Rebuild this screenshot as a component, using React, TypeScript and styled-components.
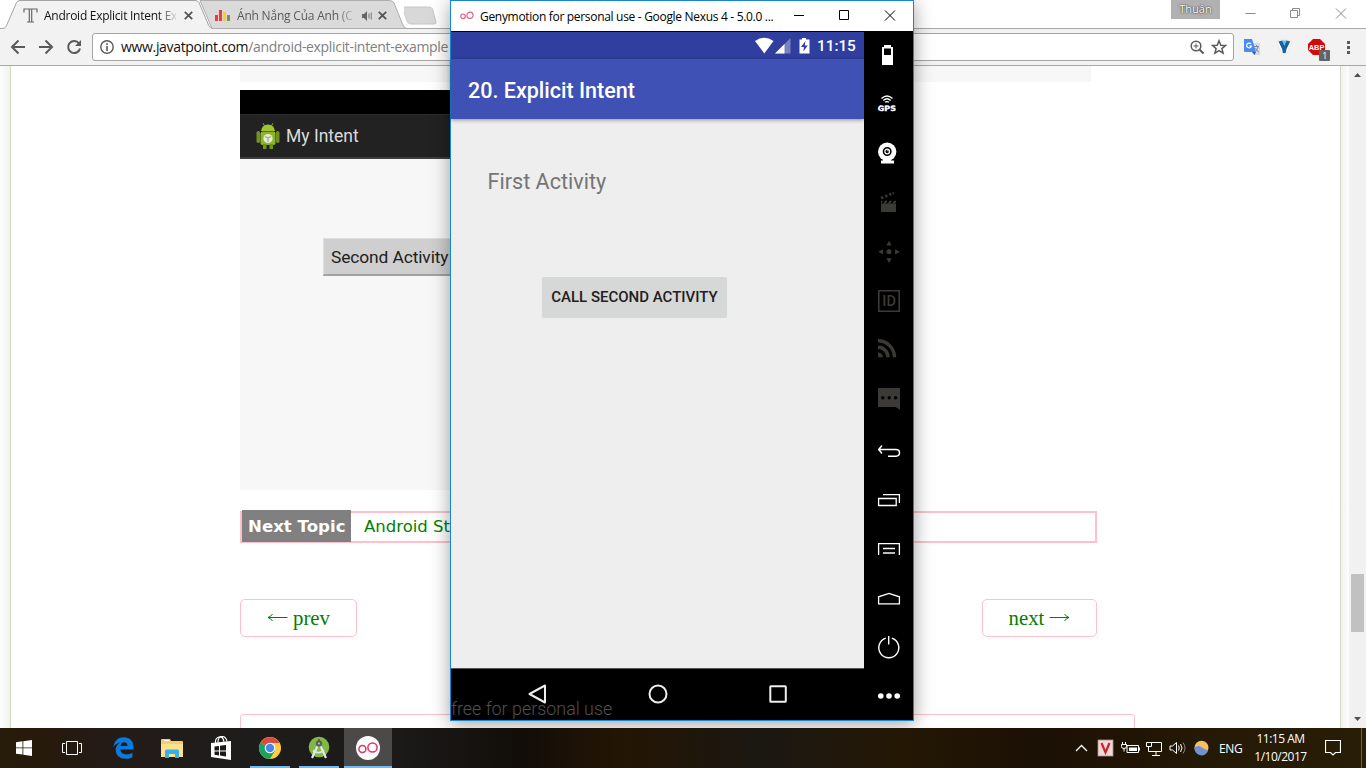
import React from 'react';
import styled, { createGlobalStyle } from 'styled-components';

const Global = createGlobalStyle`
  * { box-sizing: border-box; }
  html, body { margin: 0; padding: 0; overflow: hidden; }
  svg { display: block; flex: none; }
`;

const ui = `"Open Sans", "Noto Sans", sans-serif`;
const roboto = `Roboto, sans-serif`;

const Desktop = styled.div`
  position: relative;
  display: flex;
  flex-direction: column;
  width: 1366px;
  height: 768px;
  overflow: hidden;
  background: #fff;
  font-family: ${ui};
`;

const Browser = styled.div`
  display: flex;
  flex-direction: column;
  height: 728px;
`;

const TabStrip = styled.div`
  display: flex;
  height: 29px;
  background: #fff;
  border-bottom: 1px solid #a9a9a9;
`;

const Tab = styled.div<{ $width: number; $pad: number; $front?: boolean }>`
  position: relative;
  display: flex;
  align-items: center;
  width: ${p => p.$width}px;
  height: 29px;
  padding: 2px 0 0 ${p => p.$pad}px;
  z-index: ${p => (p.$front ? 2 : 1)};
`;

const TabShape = styled.svg`
  position: absolute;
  left: 0;
  top: 0;
  overflow: visible;
`;

const TabTitle = styled.span<{ $color: string; $width: number; $gap: number; $track: number }>`
  position: relative;
  width: ${p => p.$width}px;
  margin-left: ${p => p.$gap}px;
  white-space: nowrap;
  font-size: 12px;
  line-height: 20px;
  letter-spacing: ${p => p.$track}px;
  color: ${p => p.$color};
  mask-image: linear-gradient(to right, #000 86%, transparent 102%);
`;

const TabGlyph = styled.svg<{ $gap?: number }>`
  position: relative;
  margin-left: ${p => p.$gap ?? 0}px;
`;

const CaptionArea = styled.div`
  display: flex;
  flex: 1;
  justify-content: flex-end;
  align-items: flex-start;
`;

const UserBadge = styled.div`
  width: 49px;
  height: 19px;
  margin-right: 25px;
  background: #b1b1b1;
  color: #fff;
  font-size: 11px;
  line-height: 17px;
  text-align: center;
  text-shadow: 0 0 2px #333, 0 0 1px #333;
`;

const Toolbar = styled.div`
  display: flex;
  align-items: center;
  height: 37px;
  background: #f2f2f2;
  border-bottom: 1px solid #a9a9a9;
`;

const NavGlyphs = styled.svg`
  width: 92px;
  height: 36px;
`;

const AddressBar = styled.div`
  display: flex;
  align-items: center;
  width: 1142px;
  height: 28px;
  padding: 0 6px 0 7px;
  border: 1px solid #a5a5a5;
  border-radius: 3px;
  background: #fff;
`;

const Url = styled.div`
  flex: 1;
  margin-left: 7px;
  font-size: 14px;
  line-height: 24px;
  letter-spacing: -0.33px;
  white-space: nowrap;
  color: #808080;
  b { font-weight: 400; color: #111; }
`;

const Viewport = styled.div`
  display: flex;
  height: 662px;
  overflow: hidden;
`;

const Gutter = styled.div<{ $side: 'left' | 'right' }>`
  width: ${p => (p.$side === 'left' ? 11 : 9)}px;
  background: ${p =>
    p.$side === 'left'
      ? 'linear-gradient(to right, #fdfdfd, #eff3ee)'
      : 'linear-gradient(to right, #eff3ee, #fdfdfd)'};
  border-${p => (p.$side === 'left' ? 'right' : 'left')}: 1px solid #d4dac2;
`;

const Page = styled.main`
  display: flex;
  flex-direction: column;
  width: 1329px;
  padding-left: 229px;
  background: #fff;
  > * { flex: none; }
`;

const CodeTail = styled.div`
  width: 851px;
  height: 16px;
  background: #f7f7f7;
`;

const Shot = styled.div`
  width: 400px;
  height: 400px;
  margin-top: 8px;
  background: #f7f7f7;
  font-family: ${roboto};
`;

const ShotStatus = styled.div`
  height: 24px;
  background: #000;
`;

const ShotBar = styled.div`
  display: flex;
  align-items: center;
  gap: 6px;
  height: 45px;
  padding-left: 16px;
  background: #222;
  border-top: 1px solid #2c2c2c;
  border-bottom: 2px solid #3c3c3c;
  color: #dcdcdc;
  font-size: 17.5px;
`;

const ShotButton = styled.div`
  width: 150px;
  height: 38px;
  margin: 79px 0 0 83px;
  padding-left: 7px;
  background: #cfcfcf;
  border: 1px solid #dedede;
  border-bottom: 2px solid #a2a2a2;
  color: #1d1d1d;
  font-size: 17.4px;
  letter-spacing: -0.12px;
  line-height: 37px;
  white-space: nowrap;
`;

const NextTopic = styled.div`
  display: flex;
  width: 857px;
  height: 32px;
  margin-top: 21px;
  border: 2px solid #ffc0cb;
`;

const NextLabel = styled.span`
  width: 109px;
  height: 32px;
  margin-top: -3px;
  padding-left: 6px;
  background: #808080;
  color: #fff;
  font: bold 16.6px/34px "DejaVu Sans", Verdana, sans-serif;
  white-space: nowrap;
`;

const NextLink = styled.a`
  margin-left: 13px;
  color: #008000;
  font: 16.5px/28px "DejaVu Sans", Verdana, sans-serif;
`;

const Pager = styled.div`
  display: flex;
  justify-content: space-between;
  width: 857px;
  margin-top: 56px;
`;

const PagerLink = styled.a<{ $width: number }>`
  display: flex;
  align-items: center;
  justify-content: center;
  gap: 5px;
  width: ${p => p.$width}px;
  height: 38px;
  border: 1px solid #ffc0cb;
  border-radius: 5px;
  color: #008000;
  font: 20.8px "Liberation Serif", serif;
`;

const CommentBox = styled.div`
  width: 895px;
  height: 40px;
  margin-top: 77px;
  border: 1px solid #ffc0cb;
  border-radius: 3px;
`;

const Scrollbar = styled.div`
  display: flex;
  flex-direction: column;
  align-items: center;
  width: 17px;
  background: #f1f1f1;
`;

const Thumb = styled.div`
  flex: none;
  width: 13px;
  height: 58px;
  margin: 491px 0 79px;
  background: #c1c1c1;
`;

/* Emulator window */
const Emulator = styled.section`
  position: absolute;
  left: 450px;
  top: 0;
  width: 464px;
  height: 721px;
  border: 1px solid #1883d7;
  background: #000;
  box-shadow: 0 3px 18px rgba(0, 0, 0, 0.38);
  display: flex;
  flex-direction: column;
  z-index: 5;
`;

const TitleBar = styled.header`
  display: flex;
  align-items: center;
  height: 30px;
  padding-left: 9px;
  background: #fff;
`;

const WindowTitle = styled.span`
  width: 310px;
  margin-left: 6px;
  font-size: 12px;
  letter-spacing: -0.31px;
  white-space: nowrap;
  color: #000;
`;

const EmulatorBody = styled.div`
  display: flex;
  flex: 1;
`;

const Phone = styled.div`
  position: relative;
  display: flex;
  flex-direction: column;
  width: 413px;
  padding-top: 1px;
  font-family: ${roboto};
`;

const StatusBar = styled.div`
  display: flex;
  align-items: center;
  justify-content: flex-end;
  height: 27px;
  padding-right: 8px;
  background: #303f9f;
  color: #fff;
  font-size: 15.3px;
  font-weight: 500;
`;

const Clock = styled.span`
  width: 39px;
  margin-left: 6px;
  padding-top: 1px;
  white-space: nowrap;
`;

const AppBar = styled.div`
  position: relative;
  height: 60px;
  padding-left: 17px;
  background: #3f51b5;
  box-shadow: 0 1px 4px rgba(0, 0, 0, 0.4);
  color: #fff;
  font-size: 21.5px;
  font-weight: 500;
  line-height: 64px;
`;

const Activity = styled.div`
  height: 549px;
  padding: 49px 0 0 36.5px;
  background: #eee;
`;

const ActivityLabel = styled.div`
  color: #757575;
  font-size: 21.6px;
  line-height: 28px;
`;

const CallButton = styled.button`
  display: block;
  width: 185px;
  height: 39.5px;
  margin: 81px 0 0 54.5px;
  padding: 0;
  border: 0;
  border-radius: 2px;
  background: #d6d7d7;
  box-shadow: 0 1px 1px rgba(0, 0, 0, 0.1);
  color: #1f2020;
  font: 500 15px/40px ${roboto};
  white-space: nowrap;
`;

const PhoneNav = styled.nav`
  display: flex;
  align-items: center;
  gap: 96.5px;
  height: 52px;
  padding: 0 0 2px 74px;
  border-top: 1px solid #555;
`;

const Watermark = styled.span`
  position: absolute;
  left: 0;
  bottom: -1px;
  color: #505050;
  font-size: 17.9px;
  font-weight: 300;
  line-height: 24px;
  white-space: nowrap;
`;

const SideTools = styled.aside`
  width: 49px;
  svg { width: 49px; height: 49px; }
`;

/* Taskbar */
const Taskbar = styled.footer`
  position: relative;
  z-index: 10;
  display: flex;
  height: 40px;
  background: linear-gradient(
    to right,
    #271b09 0,
    #261a0c 50px,
    #241b18 110px,
    #1e1d1b 220px,
    #1b1a19 400px,
    #120d08 520px,
    #241503 620px,
    #1b1712 760px,
    #241804 900px,
    #1b1004 1040px,
    #241905 1200px,
    #281d05 1366px
  );
`;

const TaskButton = styled.div<{ $width: number; $active?: boolean; $running?: boolean }>`
  display: flex;
  align-items: center;
  justify-content: center;
  width: ${p => p.$width}px;
  background: ${p => (p.$active ? '#4b4a48' : 'transparent')};
  box-shadow: ${p => (p.$running ? 'inset 0 -2px 0 #76b9ed' : 'none')};
`;

const Spacer = styled.div<{ $width: number }>`
  width: ${p => p.$width}px;
`;

const Tray = styled.div`
  display: flex;
  align-items: center;
  margin-left: auto;
  color: #fff;
`;

const TrayLang = styled.span`
  width: 30.5px;
  font-size: 12px;
  letter-spacing: -0.3px;
`;

const TrayClock = styled.div`
  width: 62px;
  margin-right: 13.5px;
  font-size: 12px;
  line-height: 18px;
  letter-spacing: -0.5px;
  text-align: center;
  white-space: nowrap;
`;

const ShowDesktop = styled.div`
  width: 5px;
  height: 40px;
  margin-left: 20px;
  border-left: 1px solid #6b6350;
`;

const grey = '#3b3a36';

const CloseX = ({ gap }: { gap: number }) => (
  <TabGlyph $gap={gap} width="9" height="9" viewBox="0 0 9 9">
    <path d="M.8.8l7.400 7.400M8.200.8L.8 8.200" stroke="#555" strokeWidth="1.800" />
  </TabGlyph>
);

const BrowserTabs = () => (
  <TabStrip>
    <Tab $width={206} $pad={23} $front>
      <TabShape width="212" height="29">
        <path d="M0 29V28.500C5 28.500 5.500 28 7 24.500L16.500 2.500Q17.500.5 20 .5H195Q198 .5 199 2.500L208.500 25Q210 28.500 213 28.500V29Z" fill="#f2f2f2" />
        <path d="M0 28.500C5 28.500 5.500 28 7 24.500L16.500 2.500Q17.500.5 20 .5H195Q198 .5 199 2.500L208.500 25Q210 28.500 213 28.500" fill="none" stroke="#a3a3a3" />
      </TabShape>
      <TabGlyph width="15" height="15" viewBox="0 0 15 15">
        <path d="M1 4.500V1h13v3.500M6.300 1v13M8.700 1v13M4 14h7" fill="none" stroke="#666" strokeWidth="1.200" />
      </TabGlyph>
      <TabTitle $color="#111" $width={132} $gap={6} $track={-0.26}>Android Explicit Intent Ex</TabTitle>
      <CloseX gap={8} />
    </Tab>
    <Tab $width={198} $pad={9}>
      <TabShape width="200" height="29">
        <path d="M-6 .5H183Q187 .5 188 3L196.500 24Q198 28.500 201 28.500H6Z" fill="#dadada" stroke="#adadad" />
      </TabShape>
      <TabGlyph width="16" height="11" viewBox="0 0 16 11">
        <path d="M0 5h3v6H0zM4 0h3v11H4z" fill="#ef3b35" />
        <path d="M8 2h3v9H8z" fill="#f5cf31" />
        <path d="M12 5h3v6h-3z" fill="#81933f" />
      </TabGlyph>
      <TabTitle $color="#5a5a5a" $width={117} $gap={6} $track={-0.2}>Ánh Nắng Của Anh (C</TabTitle>
      <TabGlyph $gap={8} width="11" height="10" viewBox="0 0 11 10">
        <path d="M0 3h2l3-3v10L2 7H0z" fill="#666" />
        <path d="M7 2.500v5M9.200 1.500v7" stroke="#777" />
      </TabGlyph>
      <CloseX gap={5} />
    </Tab>
    <svg width="36" height="29">
      <path d="M-1.500 8.500Q-2 7 0 7H25Q27.500 7 28.500 9L32 22Q32.500 24 30 24H7Q4.500 24 3.500 22Z" fill="#d8d8d8" stroke="#c6c6c6" />
    </svg>
    <CaptionArea>
      <UserBadge>Thuận</UserBadge>
      <svg width="121" height="28" fill="none" stroke="#8b8b8b">
        <path d="M.5 13.500h10M45.500 10.500h7v7h-7zM47.500 10.500v-2h7v7h-2M91 8.500l10 10M101 8.500l-10 10" />
      </svg>
    </CaptionArea>
  </TabStrip>
);

const BrowserToolbar = () => (
  <Toolbar>
    <NavGlyphs fill="none" stroke="#5a5a5a" strokeWidth="2">
      <path d="M25 18H12.500M18.500 11.500L12 18l6.500 6.500M39 18h12.500M45.500 11.500L52 18l-6.500 6.500" />
      <path d="M79 14.500A6 6 0 1 0 80 19.500" />
      <path d="M81 11v6h-6z" fill="#5a5a5a" stroke="none" />
    </NavGlyphs>
    <AddressBar>
      <svg width="14" height="14" viewBox="0 0 14 14" fill="none" stroke="#5a5a5a">
        <circle cx="7" cy="7" r="6.200" strokeWidth="1.400" />
        <path d="M7 6v5M7 3.200v1.700" strokeWidth="1.600" />
      </svg>
      <Url><b>www.javatpoint.com</b>/android-explicit-intent-example</Url>
      <svg width="38" height="18" viewBox="0 0 38 18" fill="none" stroke="#5a5a5a">
        <circle cx="7" cy="8" r="4.800" strokeWidth="1.500" />
        <path d="M10.500 11.500l4 4" strokeWidth="2" />
        <path d="M4.500 8h5M7 5.500v5" />
        <path d="M30 2.800l1.800 4.400 4.700.3-3.600 3.100 1.200 4.600-4.100-2.500-4.100 2.500 1.200-4.600-3.600-3.100 4.700-.3z" strokeWidth="1.500" />
      </svg>
    </AddressBar>
    <svg width="132" height="36" viewBox="0 0 132 36">
      <path d="M17 14h9v12h-6z" fill="#d8dadd" />
      <path d="M10 10h8l4 13H11q-1 0-1-1z" fill="#4a8af4" />
      <path d="M18 23h4l-1.500 3z" fill="#3a52c4" />
      <path d="M17 15a2.400 2.400 0 1 0 .4 2h-2.200" fill="none" stroke="#fff" strokeWidth="1.200" />
      <path d="M20 17.500h5M22.500 16v2M24 17.500c-.5 3-2 4.500-3 5.500M21.500 19c1 2 2 3.200 3.500 4" fill="none" stroke="#7b909a" />
      <path d="M43 12q6-3 14 0l.5 3-5 9.500h-4L43 15z" fill="#fff" stroke="#ddd" strokeWidth=".6" />
      <path d="M44.500 12.500l4-1 1.900 3 1.800-3 4 1-3.700 7.500-.8 4h-2.800l-.8-4z" fill="#1a5f9f" />
      <path d="M48 11.500h4.800l-2.400 5.500z" fill="#63c6ef" />
      <path d="M79 10h7l5 5v6l-5 5h-7l-5-5v-6z" fill="#d20a0a" />
      <text x="74.800" y="21" fontFamily="Liberation Sans" fontWeight="bold" fontSize="8" fill="#fff" textLength="15.500" lengthAdjust="spacingAndGlyphs">ABP</text>
      <rect x="85" y="21" width="11" height="11" rx="1" fill="#646464" />
      <text x="88.200" y="30" fontFamily="Open Sans" fontSize="9" fill="#fff">1</text>
      <path d="M113 12h3v3h-3zM113 17h3v3h-3zM113 22h3v3h-3z" fill="#5a5a5a" />
    </svg>
  </Toolbar>
);

const AndroidBot = () => (
  <svg width="24" height="28" viewBox="0 0 24 28">
    <path d="M7 1l2 4M17 1l-2 4" stroke="#7b9a2b" />
    <path d="M5 9q1-6.500 7-6.500T19 9z" fill="#9ec52e" />
    <rect x="4.500" y="9.500" width="15" height="13.500" rx="2" fill="#8db52a" />
    <rect x="0.500" y="9" width="3.500" height="12" rx="1.700" fill="#6f921f" />
    <rect x="20" y="9" width="3.500" height="12" rx="1.700" fill="#6f921f" />
    <path d="M7 22h3.500v5H7zM13.500 22H17v5h-3.500z" fill="#6f921f" />
    <circle cx="12" cy="16.500" r="4.600" fill="#e6ecd8" />
    <path d="M9 14.500l3 1.500 3-1.500M12 16v4" fill="none" stroke="#9aa78a" strokeWidth="1.200" />
  </svg>
);

const WebPage = () => (
  <Viewport>
    <Gutter $side="left" />
    <Page>
      <CodeTail />
      <Shot>
        <ShotStatus />
        <ShotBar><AndroidBot />My Intent</ShotBar>
        <ShotButton>Second Activity</ShotButton>
      </Shot>
      <NextTopic>
        <NextLabel>Next Topic</NextLabel>
        <NextLink>Android Startactivityforresult</NextLink>
      </NextTopic>
      <Pager>
        <PagerLink $width={117}>
          <svg width="21" height="10" viewBox="0 0 21 10" fill="none" stroke="#008000"><path d="M20.500 4.500H1.500M5.500 1Q4 3.500 1 4.500q3 1 4.500 3.500" /></svg>
          prev
        </PagerLink>
        <PagerLink $width={115}>
          next
          <svg width="21" height="10" viewBox="0 0 21 10" fill="none" stroke="#008000"><path d="M.5 4.500h19M15.500 1Q17 3.500 20 4.500q-3 1-4.500 3.500" /></svg>
        </PagerLink>
      </Pager>
      <CommentBox />
    </Page>
    <Gutter $side="right" />
    <Scrollbar>
      <svg width="17" height="17"><path d="M5 11h7L8.500 7z" fill="#505050" /></svg>
      <Thumb />
      <svg width="17" height="17"><path d="M5 6h7l-3.500 4z" fill="#505050" /></svg>
    </Scrollbar>
  </Viewport>
);

const SideIcons = () => (
  <SideTools>
    <svg fill="#fff">
      <path d="M20 14h7v2h2v18H18V16h2z" />
      <path d="M20 17.500h7V24h-7z" fill="#000" />
    </svg>
    <svg fill="none" stroke="#fff" strokeWidth="1.300">
      <path d="M17.500 18.500Q23 13.500 28.500 18.500M19.300 20.500Q23 17 26.700 20.500M21 22.300Q23 20.800 25 22.300" />
      <text x="13.800" y="31.300" fontFamily="DejaVu Sans" fontWeight="bold" fontSize="7.400" textLength="18.200" lengthAdjust="spacingAndGlyphs" fill="#fff" stroke="#fff" strokeWidth=".3">GPS</text>
    </svg>
    <svg fill="#fff">
      <path d="M19 30h8v1.500h3v3H17v-3h2z" />
      <circle cx="23.200" cy="22.800" r="9.200" />
      <circle cx="23.200" cy="22.500" r="3.700" stroke="#000" strokeWidth="1.600" />
      <circle cx="23.200" cy="22.500" r="1.700" fill="#000" />
      <circle cx="24" cy="21.800" r=".7" />
    </svg>
    <svg fill={grey}>
      <path d="M17 25.500h15V34H17zM17 22.700h2l-1.500 2.500H17zM21 22.700h2.500L22 25.200h-2.500zM25.500 22.700H28l-1.500 2.500H24zM30 22.700h2l0 1-1 1.500h-2.500z" />
      <path d="M16.500 19l2-1 1.500 2.200-2.500 1zM20.500 17.200l2-1 1.600 2.200-2 1zM24.500 15.600l2-.8 1.500 2.200-2 .9zM28.200 14.300l1.300-.4.8 2.200-1.200.4z" />
    </svg>
    <svg fill={grey}>
      <circle cx="25" cy="24.800" r="2.500" />
      <path d="M25 14l2.700 4.600h-5.400zM25 36l2.700-4.700h-5.400zM14.200 24.800l4.700-2.600v5.200zM35.800 24.800l-4.700-2.600v5.200z" />
    </svg>
    <svg fill="none" stroke={grey} strokeWidth="1.600">
      <path d="M14.800 14.800h20.400v20.400H14.800z" />
      <text x="18.200" y="30" fontFamily="Roboto" fontWeight="500" fontSize="14.500" textLength="13.800" fill={grey} stroke="none">ID</text>
    </svg>
    <svg fill="none" stroke={grey} strokeWidth="3.400">
      <path d="M14 15.800A16.500 16.500 0 0 1 30.500 32.300M14 22.300A10 10 0 0 1 24 32.300" />
      <path d="M14 27.500a5 5 0 0 1 5 4.800h-5z" fill={grey} stroke="none" />
    </svg>
    <svg fill={grey}>
      <path d="M14 14h22v21.700L31.500 33H14z" />
      <g fill="#000"><circle cx="18.800" cy="23.800" r="1.700" /><circle cx="25.200" cy="23.800" r="1.700" /><circle cx="31.600" cy="23.800" r="1.700" /></g>
    </svg>
    <svg fill="none" stroke="#fff" strokeWidth="1.500">
      <path d="M18 22.500L14.700 26.500l3.300 4M15 26.500h17q3.500 0 3.500 3.300T32 33.200h-8" />
    </svg>
    <svg fill="none" stroke="#fff" strokeWidth="1.300">
      <path d="M14.600 26.500h17.600v7H14.600zM19 22.600h16.400V31" />
    </svg>
    <svg fill="none" stroke="#fff" strokeWidth="1.300">
      <path d="M14.600 34V22.600h20.800V34M19 27.500h12" />
      <path d="M19 32h12" strokeWidth="2" stroke="#bbb" />
    </svg>
    <svg fill="none" stroke="#fff" strokeWidth="1.300">
      <path d="M14.600 33.800v-7L25 23.500l10.400 3.300v7z" />
    </svg>
    <svg fill="none" stroke="#fff" strokeWidth="1.400">
      <path d="M21.800 19.200A10 10 0 1 0 27.800 19.200M24.700 17v8.500" />
    </svg>
    <svg fill="#fff">
      <circle cx="16.800" cy="28" r="2.800" /><circle cx="25" cy="28" r="2.800" /><circle cx="33.200" cy="28" r="2.800" />
    </svg>
  </SideTools>
);

const EmulatorWindow = () => (
  <Emulator>
    <TitleBar>
      <svg width="14" height="10" viewBox="0 0 14 10" fill="none" stroke="#e0608f" strokeWidth="1.200">
        <circle cx="3" cy="5.300" r="2.300" /><circle cx="10" cy="4.300" r="3.100" />
      </svg>
      <WindowTitle>Genymotion for personal use - Google Nexus 4 - 5.0.0 ...</WindowTitle>
      <svg width="120" height="30" fill="none" stroke="#000">
        <path d="M4 14.500h10M49.500 9.500h9v9h-9zM95 9.500l10 10M105 9.500l-10 10" />
      </svg>
    </TitleBar>
    <EmulatorBody>
      <Phone>
        <StatusBar>
          <svg width="56" height="20" viewBox="0 0 56 20" fill="#fff">
            <path d="M0 5Q9.300-1.500 18.500 5L9.300 17.500z" />
            <path d="M35.500 2v15.500H20z" opacity=".35" />
            <path d="M29.500 8V17.500H20z" />
            <path d="M44.500 3.500H47V2h4v1.500h3.500V17.500h-10z" />
            <path d="M50.500 5L46 11h3l-.7 4.500L52.800 9.500h-3z" fill="#303f9f" />
          </svg>
          <Clock>11:15</Clock>
        </StatusBar>
        <AppBar>20. Explicit Intent</AppBar>
        <Activity>
          <ActivityLabel>First Activity</ActivityLabel>
          <CallButton>CALL SECOND ACTIVITY</CallButton>
        </Activity>
        <PhoneNav>
          <svg width="24" height="24" viewBox="0 0 24 24" fill="none" stroke="#eee" strokeWidth="2"><path d="M4.500 12L20 3.500v17z" strokeLinejoin="round" /></svg>
          <svg width="24" height="24" viewBox="0 0 24 24" fill="none" stroke="#eee" strokeWidth="2"><circle cx="12" cy="12" r="8.500" /></svg>
          <svg width="24" height="24" viewBox="0 0 24 24" fill="none" stroke="#eee" strokeWidth="2"><rect x="4.300" y="4.300" width="15.500" height="15.500" rx=".6" /></svg>
        </PhoneNav>
        <Watermark>free for personal use</Watermark>
      </Phone>
      <SideIcons />
    </EmulatorBody>
  </Emulator>
);

const TaskbarRow = () => (
  <Taskbar>
    <TaskButton $width={48}>
      <svg width="16" height="16" viewBox="0 0 16 16" fill="#fff"><path d="M0 2.200l6.500-.9v6.200H0zM7.300 1.200L16 0v7.500H7.300zM0 8.300h6.500v6.200L0 13.700zM7.300 8.300H16V16l-8.700-1.200z" /></svg>
    </TaskButton>
    <TaskButton $width={48}>
      <svg width="20" height="14" viewBox="0 0 20 14" fill="none" stroke="#fff"><path d="M4.500.5h11v13h-11zM3 2.500H.5v9H3M17 2.500h2.500v9H17" /></svg>
    </TaskButton>
    <TaskButton $width={54}>
      <svg width="21" height="22" viewBox="0 0 21 22"><path d="M.3 10C1.500 3.500 5.500.3 10.700.3 17 .3 20.500 4.500 20.500 10v2.600H7.300c.2 3.200 3 4.800 6.300 4.800 2.300 0 4.200-.6 5.800-1.600v4.500c-1.800 1-4 1.500-6.600 1.500C6.500 21.800 2.700 18 2.700 13c0-3.200 1.800-6 4.700-7.400C4.300 6 2 7.500.3 10zM7.500 9h7c0-2.300-1.200-3.700-3.300-3.700S7.800 6.700 7.500 9z" fill="#0a7bdc" /></svg>
    </TaskButton>
    <TaskButton $width={44}>
      <svg width="22" height="19" viewBox="0 0 22 19"><path d="M0 1q0-1 1-1h8l1 2h11q1 0 1 1v14H0z" fill="#f6cf65" /><path d="M0 5h22v13H0z" fill="#fde28d" /><path d="M4 19v-7q0-1.500 1.500-1.500h11Q18 10.500 18 12v7h-4v-4H8v4z" fill="#36b0e6" /><path d="M3 1.500h5" stroke="#fff" /></svg>
    </TaskButton>
    <TaskButton $width={54}>
      <svg width="22" height="24" viewBox="0 0 22 24"><path d="M1 7l20-2v19L1 21z" fill="#fff" /><path d="M5.500 7Q5 2 9 1q4-1 5 5M8 6.500Q8 .5 12 .5t5 5" fill="none" stroke="#fff" strokeWidth="1.200" /><path d="M4.500 10.500l4.500-.6v4.500H4.500zM10 9.700l6-.8v5.500h-6zM4.500 15.400H9v4l-4.500-.7zM10 15.400h6v5l-6-.8z" fill="#1b1a19" /></svg>
    </TaskButton>
    <Spacer $width={2} />
    <TaskButton $width={40} $running>
      <svg width="22" height="22" viewBox="0 0 22 22"><circle cx="11" cy="11" r="11" fill="#fccd45" /><path d="M11 11L1.500 5.500A11 11 0 0 0 11 22l5-8.500z" fill="#1aa260" /><path d="M11 11L1.500 5.500A11 11 0 0 1 20.600 6H11z" fill="#dc4a3d" /><circle cx="11" cy="11" r="5.300" fill="#fff" /><circle cx="11" cy="11" r="4.200" fill="#4688f1" /></svg>
    </TaskButton>
    <Spacer $width={9} />
    <TaskButton $width={40} $running>
      <svg width="22" height="24" viewBox="0 0 22 24"><circle cx="11" cy="11" r="10.300" fill="#82b944" /><path d="M10 9L4 22M12 9l6 13" stroke="#e6e6e6" strokeWidth="2.200" /><path d="M5 14.500q6 4.500 11-.5" fill="none" stroke="#e6e6e6" strokeWidth="1.600" /><circle cx="11" cy="7.500" r="3.200" fill="#5b6358" /><circle cx="11" cy="7.500" r="1.100" fill="#a9c98a" /><path d="M10 3h2v3h-2z" fill="#5b6358" /></svg>
    </TaskButton>
    <Spacer $width={5} />
    <TaskButton $width={48} $active $running>
      <svg width="24" height="24" viewBox="0 0 24 24"><circle cx="12" cy="12" r="12" fill="#fff" /><g fill="none" stroke="#e2306c" strokeWidth="1.500"><circle cx="6.400" cy="13" r="3.500" /><circle cx="16.500" cy="11.500" r="4.600" /></g></svg>
    </TaskButton>
    <Tray>
      <svg width="144" height="40" viewBox="0 0 144 40" fill="none" stroke="#fff">
        <path d="M1 23l5.500-5.500L12 23" strokeWidth="1.300" />
        <rect x="23" y="12" width="15" height="16" fill="#f3d9d9" stroke="#b88" strokeWidth=".8" />
        <path d="M26.500 15l4 9.500 4-9.500" stroke="#c1272d" strokeWidth="2.200" />
        <path d="M52 17.500h11.500v7H52zM64.500 19.500v3" />
        <path d="M54 19.500h8v3.500h-8z" fill="#fff" stroke="none" />
        <path d="M46.500 16.500h5v2q0 2-2.500 2t-2.500-2zM47.500 14v2M50.500 14v2M49 20.500v3" />
        <path d="M76 14.500h10.500v9H73.500V20M81 23.500v4M77 27.500h8M71.500 14.500h5v4h-5zM73.500 18v3" />
        <path d="M95 18h2.500l4-3.500v11l-4-3.500H95zM103.500 17.500q1.500 2.500 0 5M105.500 16q3 4 0 8" />
        <path d="M108 14.500q4 5.500 0 11" stroke="#888" />
        <circle cx="126.500" cy="19.700" r="7" fill="#f6bd62" stroke="none" />
        <path d="M119.500 19.500q4-3 7.500 0t6.300 2.300A7 7 0 0 1 119.500 19.500z" fill="#6f93cf" stroke="none" />
      </svg>
      <TrayLang>ENG</TrayLang>
      <TrayClock>11:15 AM<br />1/10/2017</TrayClock>
      <svg width="16" height="16" viewBox="0 0 16 16" fill="none" stroke="#fff"><path d="M.5.500h15v12h-5L8 15l-2.500-2.500h-5z" strokeWidth="1.200" /></svg>
      <ShowDesktop />
    </Tray>
  </Taskbar>
);

export default function App() {
  return (
    <Desktop>
      <Global />
      <Browser>
        <BrowserTabs />
        <BrowserToolbar />
        <WebPage />
      </Browser>
      <EmulatorWindow />
      <TaskbarRow />
    </Desktop>
  );
}
